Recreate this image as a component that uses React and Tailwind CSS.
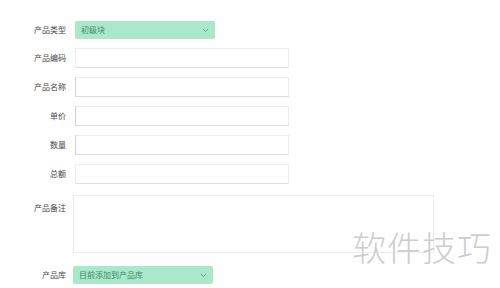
import { ChevronDown } from "lucide-react";

const font = { fontFamily: '"Noto Sans CJK SC", "Noto Sans", sans-serif' };

function Label({ children, top }) {
  return (
    <div
      className={`w-[67px] shrink-0 pr-[1px] text-right text-[8px] leading-none text-[#4a4a4a] ${
        top ? "pt-[9px]" : ""
      }`}
    >
      {children}
    </div>
  );
}

function Select({ value }) {
  return (
    <div className="flex h-[18px] w-[140px] items-center justify-between rounded-[2px] bg-[#a9e8cb] pl-[6px] pr-[5px]">
      <span className="text-[8px] leading-none text-[#3f8a63]">{value}</span>
      <ChevronDown size={9} className="text-[#5c9c7c]" strokeWidth={2.5} />
    </div>
  );
}

function Input({ caret }) {
  return (
    <div
      className={`h-[20px] w-[214px] border border-[#ececec] border-b-[#dedede] bg-white ${
        caret ? "border-l-[#d6d3c4]" : ""
      }`}
    />
  );
}

export default function App() {
  const rows = [
    { label: "产品编码" },
    { label: "产品名称", caret: true },
    { label: "单价", caret: true },
    { label: "数量", caret: true },
    { label: "总额" },
  ];

  return (
    <div className="relative h-[288px] w-[500px] overflow-hidden bg-[#fefefe]" style={font}>
      <div className="flex flex-col pt-[21px]">
        <div className="flex items-center gap-[8px]">
          <Label>产品类型</Label>
          <Select value="初级块" />
        </div>

        <div className="mt-[9px] flex flex-col gap-[9px]">
          {rows.map((r) => (
            <div key={r.label} className="flex items-center gap-[8px]">
              <Label>{r.label}</Label>
              <Input caret={r.caret} />
            </div>
          ))}
        </div>

        <div className="mt-[11px] flex items-start gap-[6px]">
          <Label top>产品备注</Label>
          <div className="h-[58px] w-[361px] border border-[#ececec] bg-white" />
        </div>

        <div className="mt-[13px] flex items-center gap-[6px]">
          <Label>产品库</Label>
          <Select value="目前添加到产品库" />
        </div>
      </div>

      <div
        className="absolute left-[352px] top-[230px] text-[34px] font-light leading-none tracking-[1px] text-[#cdcdcd]"
        style={{ textShadow: "0 0 3px #fff, 0 0 3px #fff" }}
      >
        软件技巧
      </div>
    </div>
  );
}
